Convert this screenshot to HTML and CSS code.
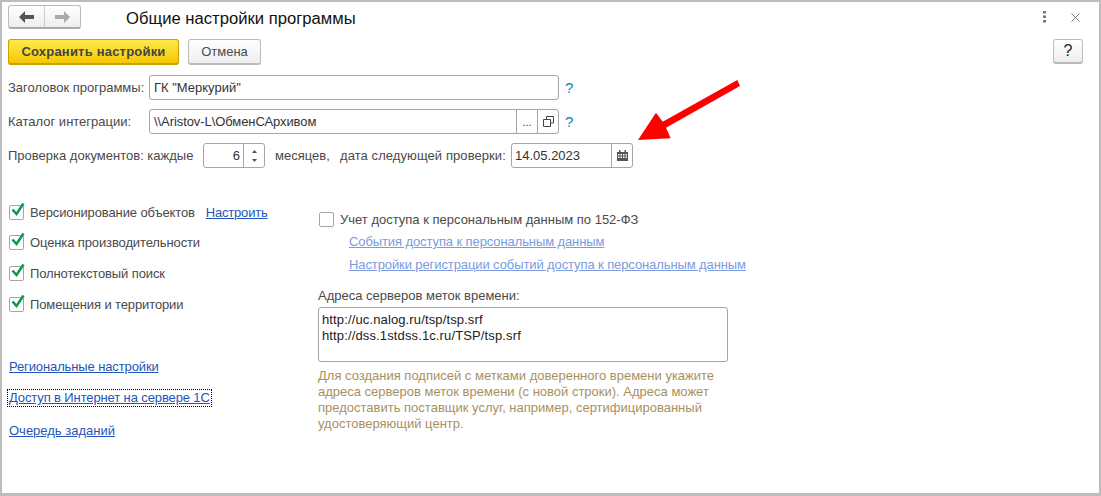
FILE: index.html
```html
<!DOCTYPE html>
<html lang="ru">
<head>
<meta charset="utf-8">
<title>Общие настройки программы</title>
<link rel="stylesheet" href="styles.css">
</head>
<body>
<div class="window">
  <header class="titlebar">
    <div class="nav">
      <button class="nav-btn"><svg width="15" height="12" viewBox="0 0 15 12"><path d="M0 6l6-6v4h9v4H6v4z" fill="#555"/></svg></button>
      <button class="nav-btn"><svg width="15" height="12" viewBox="0 0 15 12"><path d="M15 6L9 0v4H0v4h9v4z" fill="#aaa"/></svg></button>
    </div>
    <h1 class="title">Общие настройки программы</h1>
    <div class="win-tools">
      <svg class="dots" width="4" height="12" viewBox="0 0 4 12"><path d="M0 0h3v2.500H0zM0 4.500h3V7H0zM0 9h3v2.500H0z" fill="#777"/></svg>
      <svg class="close" width="9" height="9" viewBox="0 0 9 9"><path d="M.5.500l8 8M8.500.500l-8 8" stroke="#777" stroke-width="1" fill="none"/></svg>
    </div>
  </header>
  <div class="commandbar">
    <button class="btn btn-primary">Сохранить настройки</button>
    <button class="btn btn-cancel">Отмена</button>
    <button class="btn btn-help">?</button>
  </div>
  <div class="form-row row-1">
    <label class="field-label">Заголовок программы:</label>
    <div class="input input-wide"><span class="input-text">ГК "Меркурий"</span></div>
    <a class="hint-q">?</a>
  </div>
  <div class="form-row row-2">
    <label class="field-label">Каталог интеграции:</label>
    <div class="input input-wide"><span class="input-text input-path">\\Aristov-L\ОбменСАрхивом</span>
      <span class="in-btn in-btn-dots">...</span>
      <span class="in-btn"><svg width="11" height="11" viewBox="0 0 11 11"><path d="M3.500 3V.5h7v6.500H8M.5 3.500h7v7h-7z" fill="none" stroke="#444"/></svg></span>
    </div>
    <a class="hint-q">?</a>
  </div>
  <div class="form-row row-3">
    <label class="label-check">Проверка документов: каждые</label>
    <div class="input spin"><span class="input-text num">6</span>
      <span class="spin-btns">
        <svg width="5" height="3" viewBox="0 0 5 3"><path d="M2.500 0L5 3H0z" fill="#555"/></svg>
        <svg width="5" height="3" viewBox="0 0 5 3"><path d="M2.500 3L5 0H0z" fill="#555"/></svg>
      </span>
    </div>
    <span class="label-months">месяцев,</span>
    <span class="label-next">дата следующей проверки:</span>
    <div class="input date"><span class="input-text">14.05.2023</span>
      <span class="in-btn in-btn-cal"><svg width="11" height="11" viewBox="0 0 11 11"><path d="M0 2h11v9H0z" fill="#555"/><path d="M2 0h1.500v2.500H2zM7.500 0H9v2.500H7.500z" fill="#555"/><path d="M1 4h1.500v1.500H1zM3.500 4H5v1.500H3.500zM6 4h1.500v1.500H6zM8.500 4H10v1.500H8.500zM1 6.500h1.500V8H1zM3.500 6.500H5V8H3.500zM6 6.500h1.500V8H6zM8.500 6.500H10V8H8.500z" fill="#fff"/></svg></span>
    </div>
  </div>
  <div class="columns">
    <div class="col-left">
      <div class="checks">
        <div class="check-row"><span class="box"><svg class="tick" width="17" height="16" viewBox="0 0 17 16"><path d="M3.500 7.500l4 4.500 7-10.500" fill="none" stroke="#0a9a50" stroke-width="2.600"/></svg></span>Версионирование объектов<a class="link link-set">Настроить</a></div>
        <div class="check-row"><span class="box"><svg class="tick" width="17" height="16" viewBox="0 0 17 16"><path d="M3.500 7.500l4 4.500 7-10.500" fill="none" stroke="#0a9a50" stroke-width="2.600"/></svg></span>Оценка производительности</div>
        <div class="check-row"><span class="box"><svg class="tick" width="17" height="16" viewBox="0 0 17 16"><path d="M3.500 7.500l4 4.500 7-10.500" fill="none" stroke="#0a9a50" stroke-width="2.600"/></svg></span>Полнотекстовый поиск</div>
        <div class="check-row"><span class="box"><svg class="tick" width="17" height="16" viewBox="0 0 17 16"><path d="M3.500 7.500l4 4.500 7-10.500" fill="none" stroke="#0a9a50" stroke-width="2.600"/></svg></span>Помещения и территории</div>
      </div>
      <div class="side-links">
        <a class="link link-tight">Региональные настройки</a>
        <a class="link link-tight link-focus">Доступ в Интернет на сервере 1С</a>
        <a class="link link-last">Очередь заданий</a>
      </div>
    </div>
    <div class="col-right">
      <div class="check-row pd-row"><span class="box"></span>Учет доступа к персональным данным по 152-ФЗ</div>
      <div class="pd-links">
        <a class="link link-off">События доступа к персональным данным</a>
        <a class="link link-off">Настройки регистрации событий доступа к персональным данным</a>
      </div>
      <div class="ts-label">Адреса серверов меток времени:</div>
      <div class="textarea">http://uc.nalog.ru/tsp/tsp.srf<br>http://dss.1stdss.1c.ru/TSP/tsp.srf</div>
      <p class="note">Для создания подписей с метками доверенного времени укажите<br>адреса серверов меток времени (с новой строки). Адреса может<br>предоставить поставщик услуг, например, сертифицированный<br>удостоверяющий центр.</p>
    </div>
  </div>
  <svg class="arrow" width="115" height="70" viewBox="0 0 115 70"><path d="M8 65L26 37.700 32.700 46.700 107.300 5 110 11 36 52.700 40.700 63.300z" fill="#fe0000"/></svg>
</div>
</body>
</html>
```
FILE: styles.css
```css
* { box-sizing: border-box; }
html, body { margin: 0; height: 100%; }
body { font-family: "Liberation Sans", Arial, sans-serif; font-size: 13px; color: #4a4a4a; background: #fff; }
.window { position: relative; width: 1101px; height: 496px; border: solid #bdbdbd; border-width: 2px 2px 3px 2px; padding: 3px 6px 0; overflow: hidden; }
button { font-family: inherit; margin: 0; cursor: default; }

.titlebar { display: flex; align-items: center; height: 24px; }
.nav { display: flex; width: 73px; height: 24px; border: 1px solid #bbb; border-bottom: 2px solid #aaa; border-radius: 3px; background: linear-gradient(#fff, #eee); }
.nav-btn { flex: 1; padding: 0; border: 0; background: none; display: flex; align-items: center; justify-content: center; }
.nav-btn + .nav-btn { border-left: 1px solid #ccc; }
.title { margin: 0 0 0 45px; padding-top: 4px; font-size: 16.65px; font-weight: 400; color: #111; }
.win-tools { margin-left: auto; display: flex; align-items: center; gap: 24px; padding-right: 13px; }

.commandbar { display: flex; margin-top: 10px; height: 26px; }
.btn { height: 26px; border: 1px solid #bbb; border-bottom-width: 2px; border-radius: 3px; background: linear-gradient(#fff, #eee); font-size: 13px; color: #4a4a4a; padding: 0; }
.btn-primary { width: 171px; border-color: #c6a500; background: linear-gradient(#ffe94d, #f6c800); font-weight: 700; color: #444; letter-spacing: .2px; }
.btn-cancel { width: 73px; margin-left: 9px; }
.btn-help { width: 30px; height: 25px; margin-left: auto; margin-right: 10px; font-size: 16px; color: #222; }

.form-row { display: flex; align-items: center; height: 25px; }
.row-1 { margin-top: 10px; }
.row-2, .row-3 { margin-top: 9px; }
.field-label { width: 141px; }
.input { display: flex; align-items: stretch; height: 25px; border: 1px solid #a5a5a5; border-radius: 3px; background: #fff; color: #333; }
.input-wide { width: 410px; }
.input-text { flex: 1; display: flex; align-items: center; padding-left: 3px; }
.input-wide .input-text { padding-left: 4px; }
.input-path { letter-spacing: -.08px; }
.in-btn { width: 21px; display: flex; align-items: center; justify-content: center; border-left: 1px solid #a5a5a5; }
.in-btn-dots { align-items: flex-end; padding-bottom: 6px; line-height: 10px; font-size: 11px; }
.hint-q { margin-left: 6px; font-size: 15px; color: #1080c0; }
.label-check { width: 195px; white-space: nowrap; }
.spin { width: 62px; }
.num { justify-content: flex-end; padding: 0 3px 0 0; }
.spin-btns { width: 21px; border-left: 1px solid #a5a5a5; display: flex; flex-direction: column; align-items: center; justify-content: center; gap: 6px; }
.label-months { margin-left: 10px; width: 65px; white-space: nowrap; }
.label-next { width: 171px; white-space: nowrap; letter-spacing: .08px; }
.date { width: 122px; }

.columns { display: flex; margin-top: 29px; }
.col-left { width: 310px; }
.check-row { display: flex; align-items: center; height: 16px; white-space: nowrap; }
.checks { display: flex; flex-direction: column; gap: 14.8px; margin-top: 7px; letter-spacing: -.12px; }
.box { position: relative; flex: none; width: 15px; height: 15px; margin: 0 6px 0 1px; border: 1px solid #a5a5a5; border-radius: 2px; background: #fff; }
.tick { position: absolute; left: -1px; top: -4px; }
.link { color: #1f55b8; text-decoration: underline; white-space: nowrap; }
.link-set { margin-left: 11px; letter-spacing: -.2px; }
.side-links { display: flex; flex-direction: column; align-items: flex-start; gap: 17px; margin: 47.600px 0 0 1px; }
.side-links .link { line-height: 14px; }
.link-tight { letter-spacing: -.12px; }
.link-last { margin-top: 2px; }
.link-focus { outline: 1px dotted #000; outline-offset: 1px; }
.col-right { flex: 1; padding-top: 14px; }
.pd-links { display: flex; flex-direction: column; align-items: flex-start; gap: 9px; margin: 8px 0 0 31px; letter-spacing: -.1px; }
.pd-links .link { line-height: 14px; }
.link-off { color: #7b9be0; }
.ts-label { margin-top: 17px; line-height: 14px; }
.textarea { width: 410px; height: 55px; margin-top: 4px; padding: 4px 3px; border: 1px solid #a5a5a5; border-radius: 3px; line-height: 16px; color: #222; letter-spacing: .13px; }
.note { margin: 6px 0 0; line-height: 16px; color: #a99060; white-space: nowrap; }
.arrow { position: absolute; left: 628px; top: 73px; }
```
